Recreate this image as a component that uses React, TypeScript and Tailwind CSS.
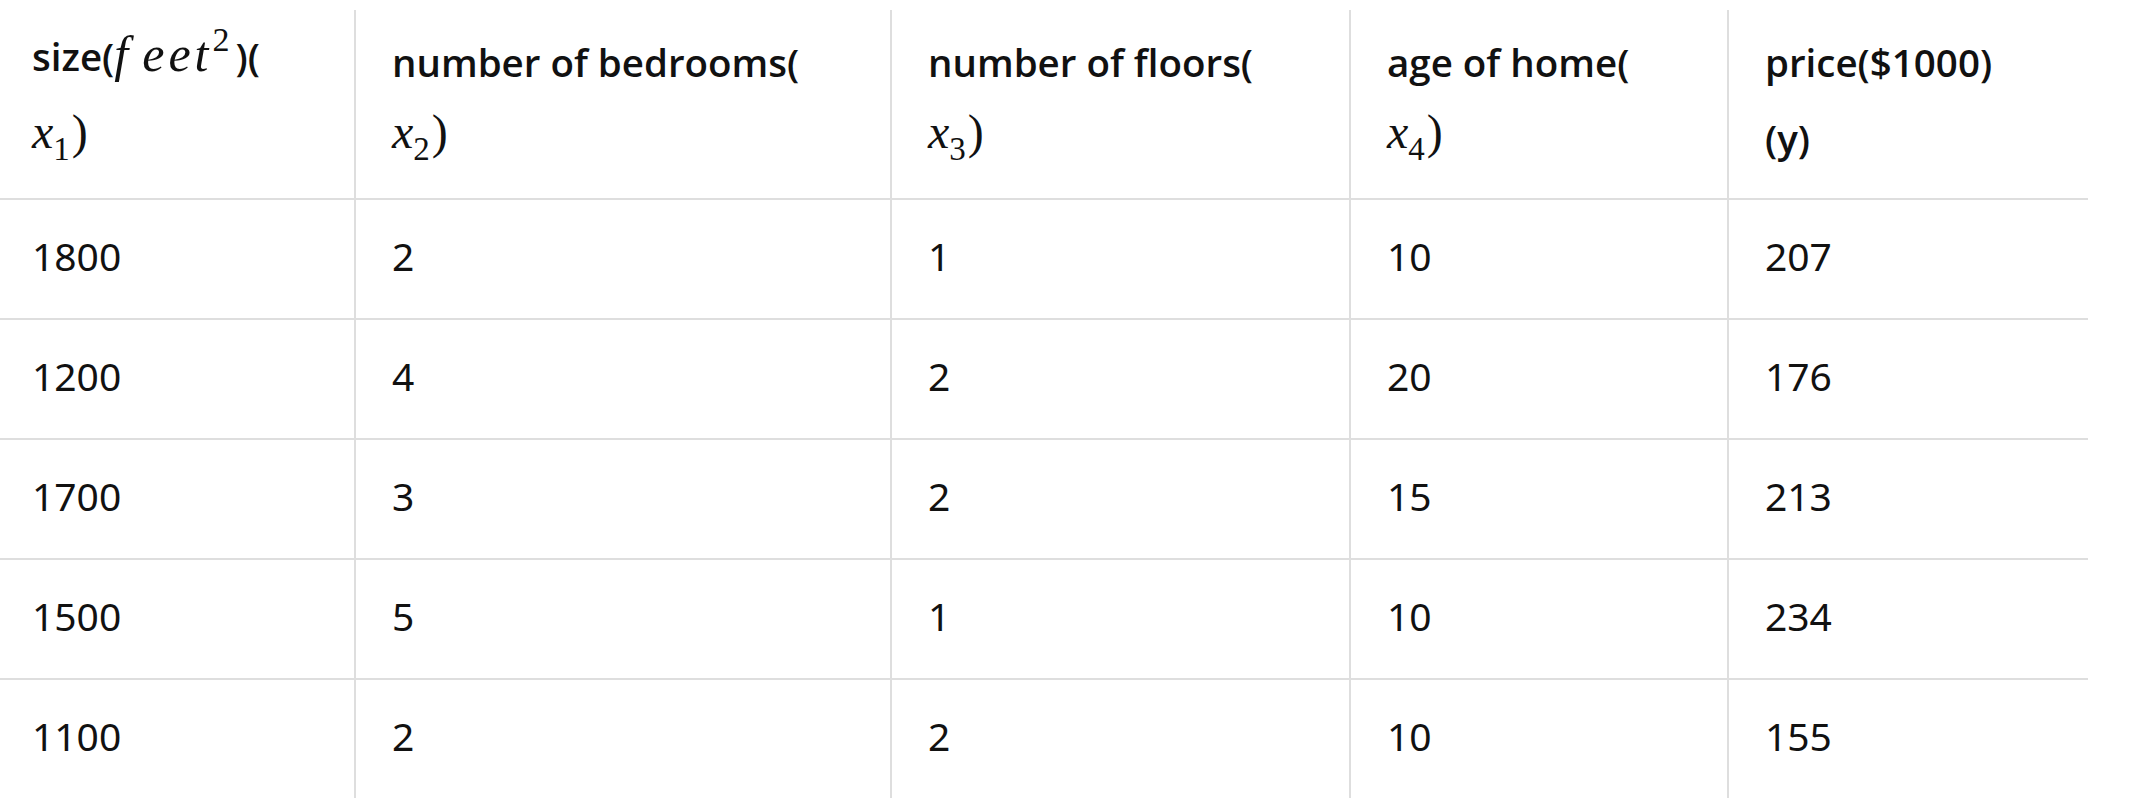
import React from "react";

const cols = "grid-cols-[354px_536px_459px_378px_361px]";
const serif = "[font-family:'Liberation_Serif',serif]";

function MathX({ n }: { n: string }) {
  return (
    <span className="inline-flex items-baseline">
      <span className={`italic text-[48px] font-normal ${serif}`}>x</span>
      <span className={`text-[33px] font-normal relative top-[12px] ${serif}`}>{n}</span>
      <span className={`font-normal text-[48px] ml-[2px] ${serif}`}>)</span>
    </span>
  );
}

function Header({ line1, line2, first }: { line1: React.ReactNode; line2: React.ReactNode; first: boolean }) {
  return (
    <div className={`flex flex-col justify-start pt-[30px] ${first ? "pl-[32px]" : "pl-[36px]"} pr-[32px]`}>
      <div className="h-[52px] flex items-end whitespace-nowrap">{line1}</div>
      <div className="h-[76px] flex items-end whitespace-nowrap">{line2}</div>
    </div>
  );
}

const rows = [
  ["1800", "2", "1", "10", "207"],
  ["1200", "4", "2", "20", "176"],
  ["1700", "3", "2", "15", "213"],
  ["1500", "5", "1", "10", "234"],
  ["1100", "2", "2", "10", "155"],
];

export default function App() {
  const headers: [React.ReactNode, React.ReactNode][] = [
    [
      <span className="flex items-baseline">
        <span>size(</span>
        <span className={`italic font-normal text-[50px] ${serif}`}>f</span>
        <span className={`italic font-normal text-[50px] ml-[14px] tracking-[4px] ${serif}`}>eet</span>
        <span className={`font-normal text-[34px] relative -top-[20px] ${serif}`}>2</span>
        <span className="ml-[6px]">)(</span>
      </span>,
      <MathX n="1" />,
    ],
    [<span>number of bedrooms(</span>, <MathX n="2" />],
    [<span>number of floors(</span>, <MathX n="3" />],
    [<span>age of home(</span>, <MathX n="4" />],
    [<span>price($1000)</span>, <span>(y)</span>],
  ];

  return (
    <div className="w-[2132px] h-[802px] bg-white text-[#111] [font-family:'Noto_Sans',sans-serif] pt-[10px]">
      <div className="w-[2088px]">
        <div className={`grid ${cols} h-[190px] border-b-2 border-[#dedede] text-[38.5px] font-semibold [font-family:'Open_Sans',sans-serif]`}>
          {headers.map((h, i) => (
            <div key={i} className={i > 0 ? "border-l-2 border-[#dedede]" : ""}>
              <Header line1={h[0]} line2={h[1]} first={i === 0} />
            </div>
          ))}
        </div>
        {rows.map((r, ri) => (
          <div
            key={ri}
            className={`grid ${cols} ${ri < rows.length - 1 ? "h-[120px] border-b-2 border-[#dedede]" : "h-[118px]"} text-[39px]`}
          >
            {r.map((c, ci) => (
              <div
                key={ci}
                className={`flex items-center pb-[5px] ${ci > 0 ? "pl-[36px] border-l-2 border-[#dedede]" : "pl-[32px]"} pr-[32px]`}
              >
                {c}
              </div>
            ))}
          </div>
        ))}
      </div>
    </div>
  );
}
